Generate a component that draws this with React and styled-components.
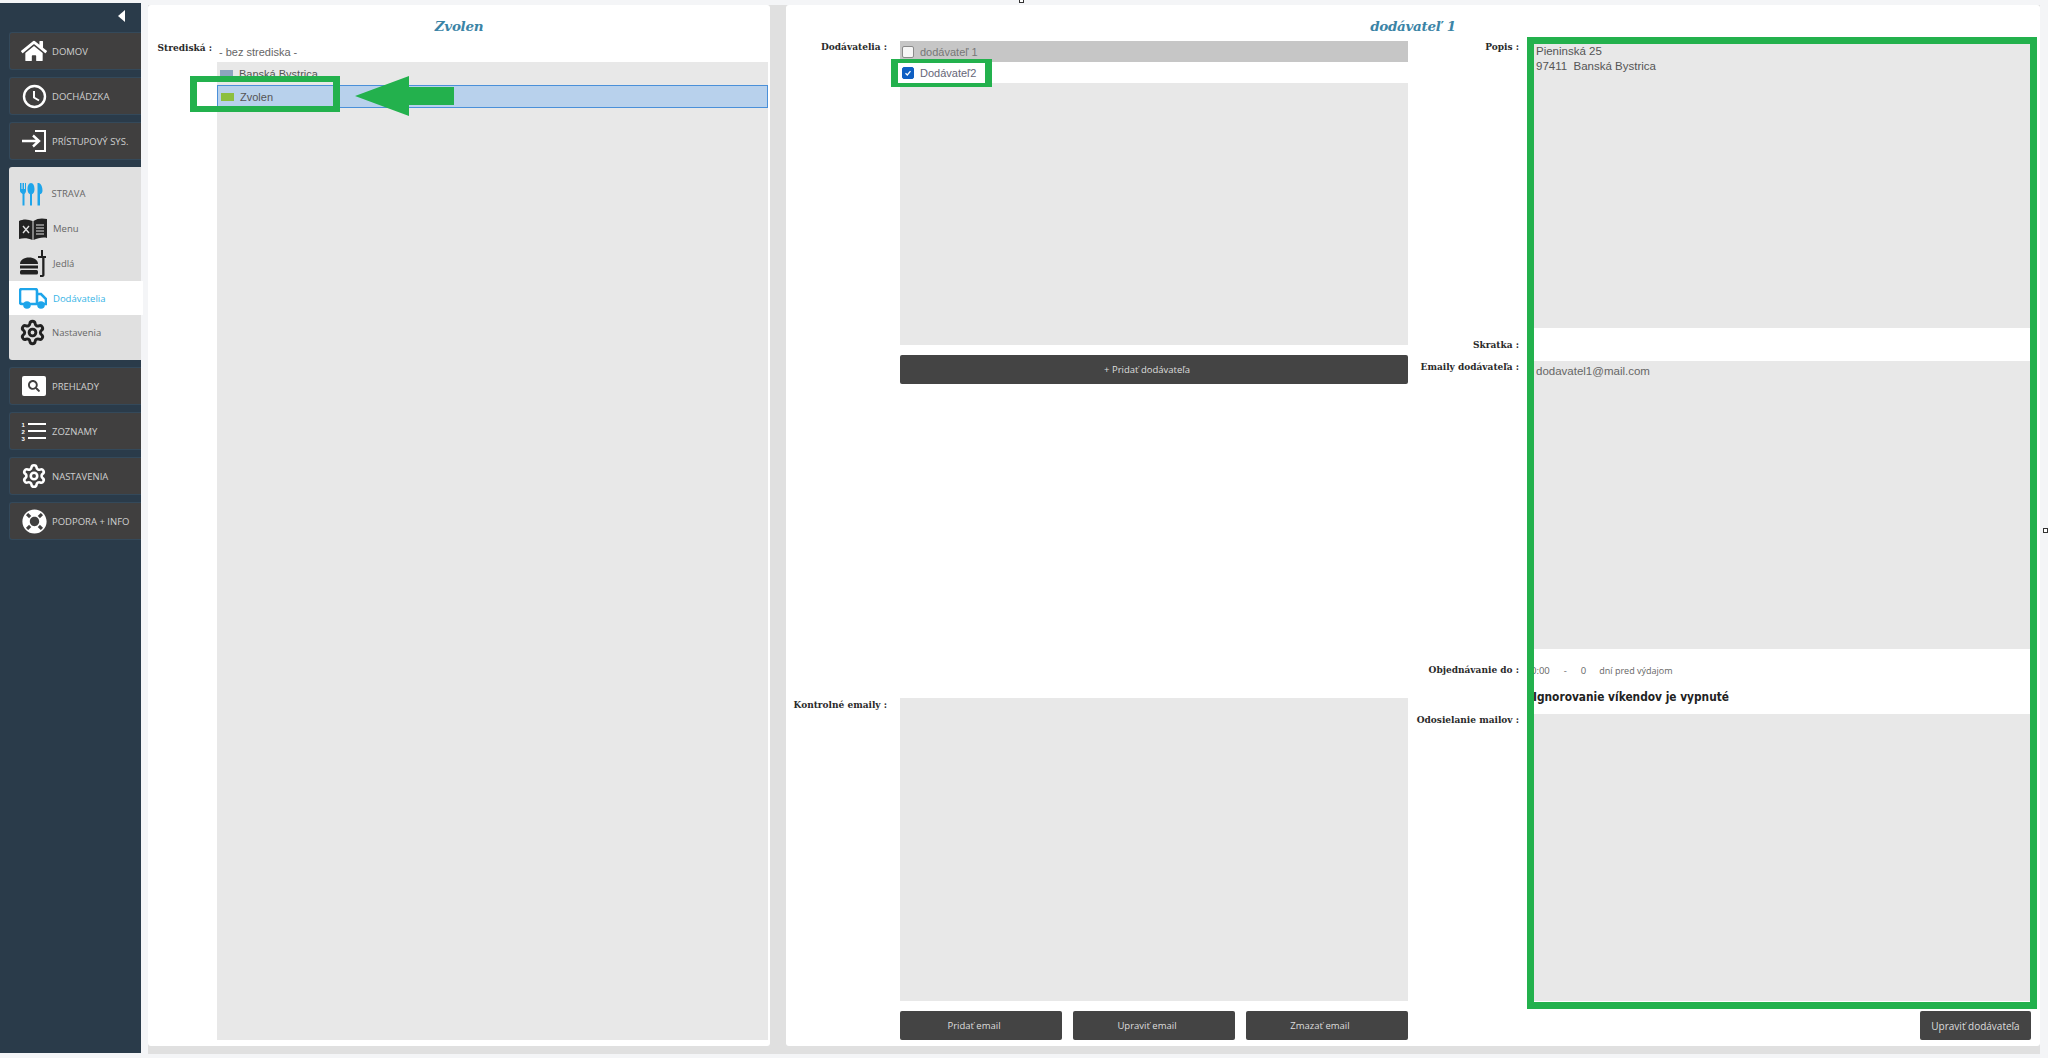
import React from 'react'
import styled, {createGlobalStyle} from 'styled-components'
import {FaHome, FaLifeRing, FaSearch} from 'react-icons/fa'
import {Settings} from 'lucide-react'

const Global = createGlobalStyle`
  html, body {
    margin: 0;
    padding: 0;
    height: 100%;
    background: #f4f5f7;
    font-family: "Liberation Sans", Arial, sans-serif;
    overflow: hidden;
  }
`

const Shell = styled.div`
  display: flex;
  height: 1058px;
  width: 2048px;
  position: relative;
`

const Sidebar = styled.nav`
  width: 141px;
  margin: 3px 0 5px;
  padding-top: 29px;
  box-sizing: border-box;
  background: #2a3b4a;
  position: relative;
  display: flex;
  flex-direction: column;
  gap: 7px;
  flex-shrink: 0;
`

const Collapse = styled.span`
  position: absolute;
  top: 7px;
  right: 16px;
  width: 0;
  height: 0;
  border-style: solid;
  border-width: 6px 7px 6px 0;
  border-color: transparent #fff transparent transparent;
`

const NavButton = styled.a`
  display: flex;
  align-items: center;
  height: 38px;
  margin-left: 9px;
  padding-left: 11px;
  gap: 5px;
  box-sizing: border-box;
  background: #403f3f;
  border: 1px solid #34495a;
  border-right: 0;
  border-radius: 3px 0 0 3px;
  color: #cfcfcf;
  font: 9.5px "Open Sans", sans-serif;
  white-space: nowrap;
`

const NavIcon = styled.span`
  width: 26px;
  height: 26px;
  display: flex;
  align-items: center;
  justify-content: center;
  color: #fff;
  flex-shrink: 0;
`

const SearchBadge = styled.span`
  width: 24px;
  height: 20px;
  background: #fff;
  border-radius: 2px;
  display: flex;
  align-items: center;
  justify-content: center;
  color: #403f3f;
`

const Group = styled.div`
  margin-left: 9px;
  height: 193px;
  padding-top: 9px;
  box-sizing: border-box;
  background: #e0e0e0;
  border-radius: 3px 0 0 3px;
  display: flex;
  flex-direction: column;
`

const GroupRow = styled.a`
  display: flex;
  align-items: center;
  height: ${p => p.$h}px;
  padding-left: 10px;
  gap: 6px;
  color: ${p => (p.$active ? '#35b4e6' : '#666')};
  background: ${p => (p.$active ? '#fff' : 'transparent')};
  margin-right: ${p => (p.$active ? '-2px' : 0)};
  font: 9.5px "Open Sans", sans-serif;
  svg { flex-shrink: 0; }
`

const Stage = styled.main`
  flex: 1;
  margin: 5px 8px 4px 7px;
  padding-bottom: 8px;
  background: #e0e0e0;
  display: flex;
  gap: 16px;
`

const Panel = styled.section`
  background: #fff;
  border-radius: 3px;
  width: ${p => p.$w}px;
  flex: ${p => (p.$w ? 'none' : 1)};
  display: flex;
  flex-direction: ${p => (p.$row ? 'row' : 'column')};
  position: relative;
  min-width: 0;
`

const Title = styled.h2`
  position: absolute;
  top: 13px;
  left: 0;
  width: 100%;
  margin: 0;
  text-align: center;
  font: italic bold 13.5px "DejaVu Serif", serif;
  letter-spacing: -0.3px;
  color: #3b84a6;
`

const Label = styled.label`
  width: ${p => p.$w}px;
  flex-shrink: 0;
  padding-top: ${p => p.$top || 0}px;
  text-align: right;
  white-space: nowrap;
  font: bold 10px "DejaVu Serif", serif;
  font-stretch: condensed;
  color: #2a2a2a;
  box-sizing: border-box;
`

const CenterBody = styled.div`
  flex: 1;
  display: flex;
  gap: 5px;
  padding: 37px 2px 6px 0;
  min-height: 0;
`

const CenterColumn = styled.div`
  flex: 1;
  display: flex;
  flex-direction: column;
  min-width: 0;
`

const Plain = styled.div`
  height: 20px;
  padding-left: 2px;
  font-size: 11px;
  line-height: 20px;
  color: #666;
`

const List = styled.div`
  flex: 1;
  background: #e8e8e8;
`

const ListRow = styled.div`
  height: 23px;
  display: flex;
  align-items: center;
  gap: 6px;
  padding-left: 3px;
  box-sizing: border-box;
  font-size: 11px;
  color: #555;
  background: ${p => (p.$selected ? '#b8d1ec' : 'transparent')};
  border: ${p => (p.$selected ? '1px solid #4a90d9' : '0')};
`

const Swatch = styled.i`
  width: 13px;
  height: 8px;
  background: ${p => p.$color};
`

const Column = styled.div`
  width: ${p => (p.$w ? `${p.$w}px` : 'auto')};
  flex: ${p => (p.$w ? 'none' : 1)};
  min-width: 0;
  padding: 36px 0 6px;
  display: flex;
  flex-direction: column;
`

const FieldRow = styled.div`
  display: flex;
  gap: ${p => p.$gap || 13}px;
  height: ${p => (p.$h ? `${p.$h}px` : 'auto')};
  margin-top: ${p => p.$mt || 0}px;
  flex-shrink: 0;
`

const FieldBody = styled.div`
  width: 508px;
  flex-shrink: 0;
  display: flex;
  flex-direction: column;
`

const SupplierRow = styled.div`
  height: ${p => p.$h}px;
  display: flex;
  align-items: center;
  gap: 6px;
  padding-left: 2px;
  font-size: 11px;
  color: ${p => (p.$checked ? '#667' : '#777')};
  background: ${p => (p.$gray ? '#c6c6c6' : '#fff')};
`

const Check = styled.span`
  width: 12px;
  height: 12px;
  box-sizing: border-box;
  border-radius: 2px;
  background: ${p => (p.$on ? '#0f5fc2' : '#f6f6f6')};
  border: 1px solid ${p => (p.$on ? '#0f5fc2' : '#8a8a8a')};
  display: flex;
  align-items: center;
  justify-content: center;
`

const DarkButton = styled.button`
  height: 29px;
  width: ${p => (p.$w ? `${p.$w}px` : '100%')};
  flex: ${p => (p.$grow ? 1 : 'none')};
  padding: 0 ${p => (p.$w ? 0 : 14)}px 0 0;
  border: 0;
  border-radius: 2px;
  background: #444;
  color: #ddd;
  white-space: nowrap;
  font: ${p => p.$fs || 9.5}px "Open Sans", sans-serif;
`

const ButtonRow = styled.div`
  display: flex;
  gap: 11px;
`

const Spacer = styled.div`
  flex: 1;
`

const Gutter = styled.div`
  width: ${p => p.$w}px;
  flex-shrink: 0;
`

const InfoBox = styled.div`
  width: 502px;
  height: ${p => p.$h}px;
  box-sizing: border-box;
  padding: 3px 5px;
  background: #e8e8e8;
  font-size: 11.5px;
  line-height: 15px;
  color: ${p => p.$color || '#555'};
  white-space: pre-wrap;
  flex-shrink: 0;
`

const OrderLine = styled.div`
  height: 42px;
  display: flex;
  align-items: center;
  font: 9.5px "Open Sans", sans-serif;
  color: #666;
  gap: 14px;
`

const OrderNote = styled.span`
  font-size: 9px;
  margin-left: -1px;
`

const WeekendNote = styled.div`
  height: 29px;
  font: bold 11.8px/25px "DejaVu Sans", sans-serif;
  font-stretch: condensed;
  color: #222;
  margin-left: 2px;
`

const Footer = styled.div`
  display: flex;
  justify-content: flex-end;
  margin: 10px 9px 0 0;
`

/* annotations painted over the screenshot */
const Frame = styled.div`
  position: absolute;
  left: ${p => p.$x}px;
  top: ${p => p.$y}px;
  width: ${p => p.$w}px;
  height: ${p => p.$h}px;
  box-sizing: border-box;
  border: solid #23b14d;
  border-width: ${p => p.$bw || '6px 7px'};
  pointer-events: none;
`

const ArrowSvg = styled.svg`
  position: absolute;
  left: 355px;
  top: 76px;
`

// selection handles left over at the edge of the capture
const Handle = styled.span`
  position: absolute;
  left: ${p => p.$x}px;
  top: ${p => p.$y}px;
  width: 5px;
  height: 5px;
  box-sizing: border-box;
  background: #fff;
  border: 1px solid #333;
`

const Clock = () => (
  <svg width="25" height="25" viewBox="0 0 25 25" fill="none" stroke="#fff">
    <circle cx="12.5" cy="12.5" r="10.5" strokeWidth="2.4" />
    <path d="M12 7v6.5l5 3" strokeWidth="2" />
  </svg>
)

const SignIn = () => (
  <svg width="26" height="24" viewBox="0 0 26 24" fill="none" stroke="#fff" strokeWidth="2">
    <path d="M14 2h10v20H14" />
    <path d="M1 12h16M12 6.5l6 5.5-6 5.5" strokeWidth="2.4" />
  </svg>
)

const Cutlery = () => (
  <svg width="24" height="24" viewBox="0 0 24 24" fill="#1ea5ea">
    <path d="M1 1h1.500v6h1V1h1.500v6h1V1H7v8c0 1.500-1 2.400-1.500 3v11.500h-2V12C3 11.400 1 10.500 1 9z" />
    <path d="M12 1c2.300 0 3.500 3 3.500 6s-1 4.500-2.500 5.200V23.500h-2V12.200C9.500 11.500 8.500 10 8.500 7S9.700 1 12 1z" />
    <path d="M20 1c2.200 1 3.500 4 3.500 7.500 0 2-.8 3.200-2.500 3.700V23.500h-2.500V1z" />
  </svg>
)

const MenuBook = () => (
  <svg width="28" height="22" viewBox="0 0 28 22" fill="#222">
    <path d="M0 3c4-2 9-2 13.500 0v19C9 20 4 20 0 21z" />
    <path d="M14.500 3c4-3 9-3 13.500-2v19c-4-1-9 0-13.500 2z" />
    <path d="M4 8l6 7M10 8l-6 7" stroke="#e0e0e0" strokeWidth="1.400" />
    <path d="M17 7h8M17 10h8M17 13h8M17 16h8" stroke="#e0e0e0" strokeWidth="1.200" />
  </svg>
)

const Burger = () => (
  <svg width="28" height="27" viewBox="0 0 28 27" fill="#222">
    <path d="M1 14c0-4 4-6.500 9-6.500s9 2.500 9 6.500z" />
    <rect x="1" y="15.500" width="18" height="3" />
    <rect x="1" y="20" width="18" height="4.500" rx="1.500" />
    <path d="M22 0h2v6h3v2h-1.500v17c0 1-1 2-2 2H21v-2h2.200V8H19V6h3z" />
  </svg>
)

const Truck = () => (
  <svg width="28" height="21" viewBox="0 0 28 21" fill="none" stroke="#1ea5ea" strokeWidth="2.600">
    <path d="M5 16H3a2 2 0 0 1-2-2V3a2 2 0 0 1 2-2h13a2 2 0 0 1 2 2v13H11" />
    <path d="M18 6h4l5 5v5h-2" />
    <circle cx="8" cy="17" r="2.500" fill="#1ea5ea" />
    <circle cx="22" cy="17" r="2.500" fill="#1ea5ea" />
  </svg>
)

const Numbered = () => (
  <svg width="26" height="20" viewBox="0 0 26 20" fill="#fff">
    <rect x="7" y="2" width="18" height="2" />
    <rect x="7" y="9" width="18" height="2" />
    <rect x="7" y="16" width="18" height="2" />
    <text x="0.500" y="5.500" fontSize="6" fontWeight="700" fontFamily="Liberation Sans, sans-serif">1</text>
    <text x="0.500" y="12.500" fontSize="6" fontWeight="700" fontFamily="Liberation Sans, sans-serif">2</text>
    <text x="0.500" y="19.500" fontSize="6" fontWeight="700" fontFamily="Liberation Sans, sans-serif">3</text>
  </svg>
)

const Tick = () => (
  <svg width="8" height="8" viewBox="0 0 8 8" fill="none" stroke="#fff" strokeWidth="1.300">
    <path d="M1.500 4.200 3.300 6 6.500 2.200" />
  </svg>
)

const App = () => (
  <Shell>
    <Global />
    <Sidebar>
      <Collapse />
      <NavButton><NavIcon><FaHome size={26} /></NavIcon>DOMOV</NavButton>
      <NavButton><NavIcon><Clock /></NavIcon>DOCHÁDZKA</NavButton>
      <NavButton><NavIcon><SignIn /></NavIcon>PRÍSTUPOVÝ SYS.</NavButton>
      <Group>
        <GroupRow $h={35}><Cutlery />&nbsp;STRAVA</GroupRow>
        <GroupRow $h={35}><MenuBook />Menu</GroupRow>
        <GroupRow $h={35}><Burger />Jedlá</GroupRow>
        <GroupRow $h={34} $active><Truck />Dodávatelia</GroupRow>
        <GroupRow $h={35}><Settings size={27} strokeWidth={2.6} color="#222" />Nastavenia</GroupRow>
      </Group>
      <NavButton><NavIcon><SearchBadge><FaSearch size={12} /></SearchBadge></NavIcon>PREHĽADY</NavButton>
      <NavButton><NavIcon><Numbered /></NavIcon>ZOZNAMY</NavButton>
      <NavButton><NavIcon><Settings size={26} strokeWidth={2.4} /></NavIcon>NASTAVENIA</NavButton>
      <NavButton><NavIcon><FaLifeRing size={25} /></NavIcon>PODPORA + INFO</NavButton>
    </Sidebar>

    <Stage>
      <Panel $w={622}>
        <Title>Zvolen</Title>
        <CenterBody>
          <Label $w={64}>Strediská :</Label>
          <CenterColumn>
            <Plain>- bez strediska -</Plain>
            <List>
              <ListRow><Swatch $color="#8da5bf" />Banská Bystrica</ListRow>
              <ListRow $selected><Swatch $color="#8cbf3f" />Zvolen</ListRow>
            </List>
          </CenterColumn>
        </CenterBody>
      </Panel>

      <Panel $row>
        <Title>dodávateľ 1</Title>
        <Column $w={622}>
          <FieldRow $h={304}>
            <Label $w={101}>Dodávatelia :</Label>
            <FieldBody>
              <SupplierRow $h={21} $gray><Check />dodávateľ 1</SupplierRow>
              <SupplierRow $h={21} $checked><Check $on><Tick /></Check>Dodávateľ2</SupplierRow>
              <List />
            </FieldBody>
          </FieldRow>
          <FieldRow $mt={10}>
            <Gutter $w={101} />
            <FieldBody><DarkButton>+ Pridať dodávateľa</DarkButton></FieldBody>
          </FieldRow>
          <Spacer />
          <FieldRow $h={303}>
            <Label $w={101} $top={1}>Kontrolné emaily :</Label>
            <FieldBody><List /></FieldBody>
          </FieldRow>
          <FieldRow $mt={10}>
            <Gutter $w={101} />
            <FieldBody>
              <ButtonRow>
                <DarkButton $grow>Pridať email</DarkButton>
                <DarkButton $grow>Upraviť email</DarkButton>
                <DarkButton $grow>Zmazať email</DarkButton>
              </ButtonRow>
            </FieldBody>
          </FieldRow>
        </Column>

        <Column>
          <FieldRow $gap={12} $h={287}>
            <Label $w={111}>Popis :</Label>
            <InfoBox $h={287}>{'Pieninská 25\n97411  Banská Bystrica'}</InfoBox>
          </FieldRow>
          <FieldRow $gap={12} $h={33}>
            <Label $w={111} $top={11}>Skratka :</Label>
          </FieldRow>
          <FieldRow $gap={12} $h={288}>
            <Label $w={111}>Emaily dodávateľa :</Label>
            <InfoBox $h={288} $color="#666">dodavatel1@mail.com</InfoBox>
          </FieldRow>
          <FieldRow $gap={12} $h={36}>
            <Label $w={111} $top={15}>Objednávanie do :</Label>
            <OrderLine><span>0:00</span><span>-</span><span>0</span><OrderNote>dní pred výdajom</OrderNote></OrderLine>
          </FieldRow>
          <FieldRow $gap={12} $h={29}>
            <Gutter $w={111} />
            <WeekendNote>Ignorovanie víkendov je vypnuté</WeekendNote>
          </FieldRow>
          <FieldRow $gap={12} $h={287}>
            <Label $w={111}>Odosielanie mailov :</Label>
            <InfoBox $h={287} />
          </FieldRow>
          <Footer><DarkButton $w={111} $fs={10}>Upraviť dodávateľa</DarkButton></Footer>
        </Column>
      </Panel>
    </Stage>

    <Frame $x={190} $y={76} $w={150} $h={36} />
    <ArrowSvg width="99" height="40" viewBox="0 0 99 40">
      <path d="M0 20 54 0v11h45v18H54v11z" fill="#23b14d" />
    </ArrowSvg>
    <Frame $x={891} $y={59} $w={101} $h={28} $bw="4px 7px" />
    <Frame $x={1527} $y={37} $w={510} $h={972} $bw="7px" />
    <Handle $x={1019} $y={-2} />
    <Handle $x={2043} $y={528} />
  </Shell>
)

export default App
